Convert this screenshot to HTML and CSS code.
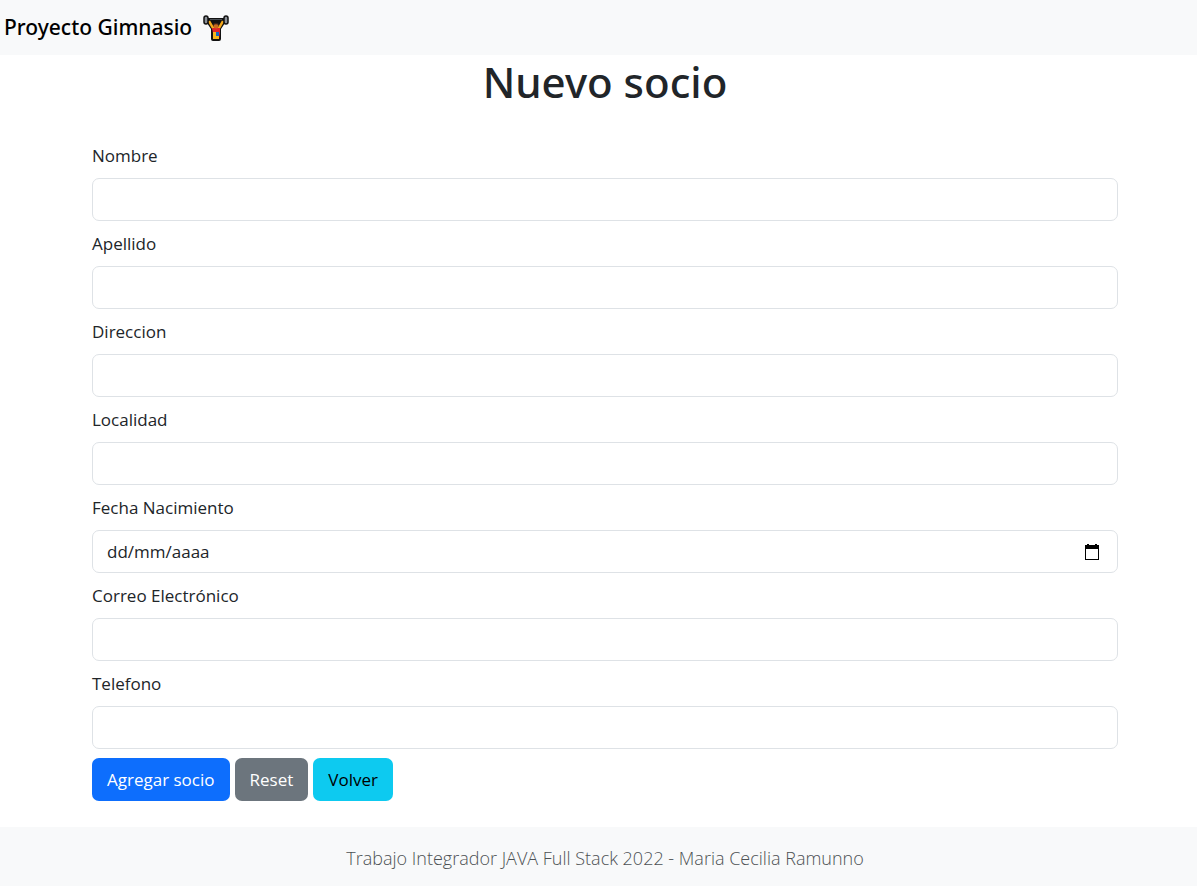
FILE: index.html
```html
<!DOCTYPE html>
<html lang="es">
<head>
<meta charset="utf-8">
<meta name="viewport" content="width=device-width, initial-scale=1">
<title>Nuevo socio</title>
<link rel="stylesheet" href="styles.css">
</head>
<body>
<header class="navbar">
  <a class="brand" href="#">Proyecto Gimnasio
    <svg class="brand-icon" viewBox="0 0 26 26" aria-hidden="true">
      <path d="M4 3h18v5l-4 6v10q0 2-2 2H10q-2 0-2-2V14L4 8z" fill="#111"/>
      <path d="M7 4h12v1H7z" fill="#4a4f55"/>
      <path d="M6 6l4 7h6l4-7" fill="none" stroke="#f5a91b" stroke-width="2.500"/>
      <path d="M9 13h8v5l-1 6h-6v-6z" fill="#e2232b"/>
      <path d="M10 17h3v7h-3z" fill="#f7b51c"/>
      <path d="M13 17h3v4h-3z" fill="#1268c4"/>
      <path d="M13 21h3v3h-3z" fill="#f7b51c"/>
      <circle cx="13" cy="11" r="2.500" fill="#c96a1e"/>
      <path d="M10 10c0-3 6-3 6 0-2-1-4-1-6 0z" fill="#3b2219"/>
      <rect x="1" y="1" width="4" height="8" rx="2" fill="#8b9097" stroke="#111" stroke-width="1.500"/>
      <rect x="21" y="1" width="4" height="8" rx="2" fill="#8b9097" stroke="#111" stroke-width="1.500"/>
    </svg>
  </a>
</header>
<main class="content">
  <h1 class="title">Nuevo socio</h1>
  <form class="form">
    <div class="field"><label class="label" for="nombre">Nombre</label><input class="control" id="nombre" type="text"></div>
    <div class="field"><label class="label" for="apellido">Apellido</label><input class="control" id="apellido" type="text"></div>
    <div class="field"><label class="label" for="direccion">Direccion</label><input class="control" id="direccion" type="text"></div>
    <div class="field"><label class="label" for="localidad">Localidad</label><input class="control" id="localidad" type="text"></div>
    <div class="field">
      <label class="label" for="fecha">Fecha Nacimiento</label>
      <div class="control date">
        <input class="date-input" id="fecha" type="text" placeholder="dd/mm/aaaa">
        <button class="date-button" type="button" aria-label="Abrir calendario">
          <svg class="date-icon" viewBox="0 0 16 16" aria-hidden="true"><path fill-rule="evenodd" d="M1 1h2V0h2v1h6V0h2v1h2v15H1zM2 5v10h12V5z"/></svg>
        </button>
      </div>
    </div>
    <div class="field"><label class="label" for="correo">Correo Electrónico</label><input class="control" id="correo" type="email"></div>
    <div class="field"><label class="label" for="telefono">Telefono</label><input class="control" id="telefono" type="tel"></div>
    <div class="actions">
      <button class="btn btn-primary" type="submit">Agregar socio</button>
      <button class="btn btn-secondary" type="reset">Reset</button>
      <a class="btn btn-info" href="#">Volver</a>
    </div>
  </form>
</main>
<footer class="footer">Trabajo Integrador JAVA Full Stack 2022 - Maria Cecilia Ramunno</footer>
</body>
</html>
```
FILE: styles.css
```css
* { box-sizing: border-box; }
body {
  margin: 0;
  min-height: 100vh;
  display: flex;
  flex-direction: column;
  background: #fff;
  color: #212529;
  font-family: "Open Sans", "Noto Sans", sans-serif;
  font-size: 17px;
  line-height: 27px;
}
.navbar {
  background: #f8f9fa;
  padding: 10px 4px;
}
.brand {
  display: inline-flex;
  align-items: center;
  gap: 11px;
  color: #000;
  font-family: "Noto Sans", "Open Sans", sans-serif;
  font-size: 21px;
  font-weight: 500;
  line-height: 35px;
  text-decoration: none;
}
.brand-icon { width: 26px; height: 26px; }
.content { flex: 1; padding: 0 0 0 13px; }
.title {
  margin: 0;
  padding: 1px 0 34px;
  text-align: center;
  font-family: "Noto Sans", "Open Sans", sans-serif;
  font-size: 42px;
  font-weight: 500;
  line-height: 52px;
}
.form {
  max-width: 1026px;
  margin: 0 auto;
}
.field {
  display: flex;
  flex-direction: column;
  gap: 9px;
  margin-bottom: 9px;
}
.control {
  width: 100%;
  height: 43px;
  padding: 7px 14px;
  border: 1px solid #dee2e6;
  border-radius: 7px;
  background: #fff;
  color: #212529;
  font: inherit;
}
.date { display: flex; align-items: center; padding-right: 17px; }
.date-input {
  flex: 1;
  padding: 0;
  border: 0;
  outline: 0;
  background: transparent;
  color: #212529;
  font: inherit;
}
.date-input::placeholder { color: #212529; opacity: 1; }
.date-button { display: flex; padding: 0; border: 0; background: none; }
.date-icon { width: 16px; height: 16px; }
.actions { display: flex; gap: 5px; }
.btn {
  padding: 8px 15px;
  border: 0;
  border-radius: 7px;
  font: inherit;
  text-decoration: none;
}
.btn-primary { background: #0d6efd; color: #fff; }
.btn-secondary { background: #6c757d; color: #fff; }
.btn-info { background: #0dcaf0; color: #000; }
.footer {
  padding: 18px 0 14px 13px;
  background: #f8f9fa;
  color: #4d5154;
  font-size: 18px;
  font-weight: 300;
  text-align: center;
}
```
